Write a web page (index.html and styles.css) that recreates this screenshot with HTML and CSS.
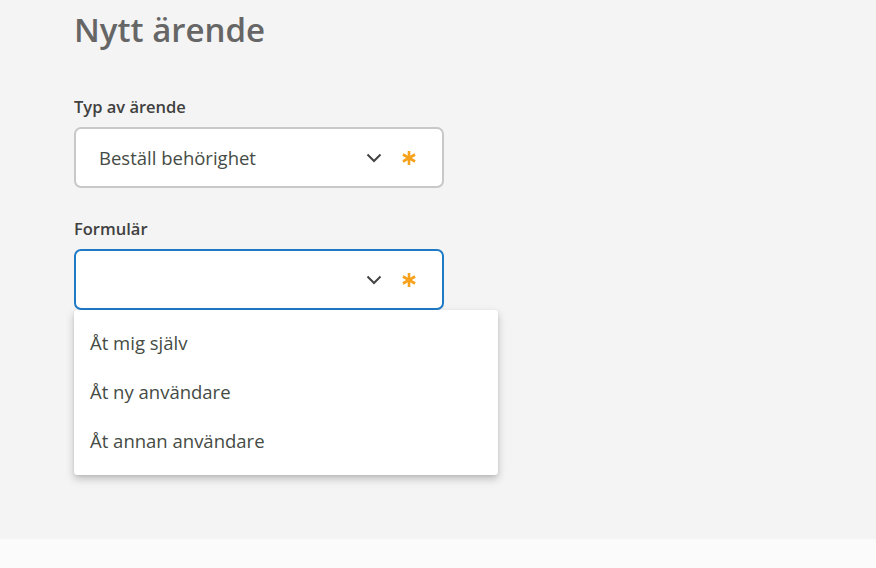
FILE: index.html
```html
<!DOCTYPE html>
<html lang="sv">
<head>
<meta charset="utf-8">
<title>Nytt ärende</title>
<link rel="stylesheet" href="styles.css">
</head>
<body>
<main class="page">
  <h1 class="title">Nytt ärende</h1>
  <div class="field">
    <label class="label">Typ av ärende</label>
    <div class="select">
      <span class="value">Beställ behörighet</span>
      <svg class="chev" width="16" height="10" viewBox="0 0 16 10"><path d="M1.5 1.5 L8 8 L14.5 1.5" fill="none" stroke="#444" stroke-width="2"/></svg>
      <svg class="req" width="16" height="16" viewBox="0 0 16 16" aria-label="obligatorisk"><g stroke="#f6a21d" stroke-width="2.6" stroke-linecap="butt"><path d="M8 1 V15"/><path d="M1.94 4.5 L14.06 11.5"/><path d="M1.94 11.5 L14.06 4.5"/></g></svg>
    </div>
  </div>
  <div class="field field2">
    <label class="label">Formulär</label>
    <div class="select open">
      <span class="value"></span>
      <svg class="chev" width="16" height="10" viewBox="0 0 16 10"><path d="M1.5 1.5 L8 8 L14.5 1.5" fill="none" stroke="#444" stroke-width="2"/></svg>
      <svg class="req" width="16" height="16" viewBox="0 0 16 16" aria-label="obligatorisk"><g stroke="#f6a21d" stroke-width="2.6" stroke-linecap="butt"><path d="M8 1 V15"/><path d="M1.94 4.5 L14.06 11.5"/><path d="M1.94 11.5 L14.06 4.5"/></g></svg>
      <ul class="menu">
        <li>Åt mig själv</li>
        <li>Åt ny användare</li>
        <li>Åt annan användare</li>
      </ul>
    </div>
  </div>
</main>
<footer class="foot"></footer>
</body>
</html>
```
FILE: styles.css
```css
html, body { margin: 0; padding: 0; }
body {
  font-family: "Open Sans", "Noto Sans", sans-serif;
  background: #fbfbfb;
  width: 876px;
  height: 568px;
  overflow: hidden;
}
.page {
  background: #f4f4f4;
  height: 539px;
  padding: 0 0 0 74px;
  box-sizing: border-box;
  display: flex;
  flex-direction: column;
}
.title {
  margin: 0;
  padding-top: 7px;
  font-size: 33px;
  line-height: 46px;
  font-weight: 600;
  color: #666;
}
.field { margin-top: 43px; display: flex; flex-direction: column; }
.field2 { margin-top: 30px; }
.label {
  font-size: 16.5px;
  font-weight: 600;
  color: #404040;
  line-height: 22px;
  margin-bottom: 9px;
}
.select {
  position: relative;
  width: 370px;
  height: 61px;
  box-sizing: border-box;
  background: #fff;
  border: 2px solid #c8c8c8;
  border-radius: 7px;
  display: flex;
  align-items: center;
  padding: 0 25px 0 23px;
}
.select.open { border-color: #1f7ac6; }
.value {
  flex: 1;
  font-size: 18.5px;
  color: #454b45;
}
.chev { margin-right: 19px; margin-top: 1px; }
.req { margin-top: 1px; }
.menu {
  position: absolute;
  top: 59px;
  left: -2px;
  width: 424px;
  margin: 0;
  padding: 8px 0 10px;
  list-style: none;
  background: #fff;
  border-radius: 3px;
  box-shadow: 0 4px 8px rgba(0,0,0,0.22), 0 1px 3px rgba(0,0,0,0.08);
}
.menu li {
  font-size: 18.5px;
  color: #454b45;
  line-height: 49px;
  padding-left: 16px;
}
.foot { height: 29px; background: #fbfbfb; }
```
